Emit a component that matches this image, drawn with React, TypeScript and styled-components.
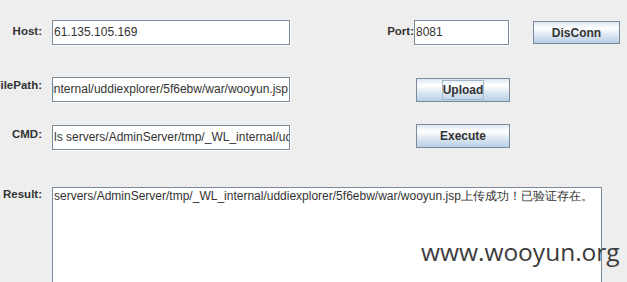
import React from "react";
import styled, { createGlobalStyle } from "styled-components";

const GlobalStyle = createGlobalStyle`
  html, body {
    margin: 0;
    padding: 0;
  }
  body {
    background: #eeeeee;
    overflow: hidden;
    font-family: "Liberation Sans", Arial, sans-serif;
  }
`;

const Window = styled.div`
  position: relative;
  width: 627px;
  height: 282px;
  overflow: hidden;
  background: #eeeeee;
  color: #333333;
`;

const Form = styled.div`
  display: flex;
  flex-direction: column;
`;

const Row = styled.div<{ $top: number }>`
  display: flex;
  align-items: flex-start;
  margin-top: ${(p) => p.$top}px;
`;

const Label = styled.label<{ $width?: number; $offset: number; $gap?: number }>`
  display: flex;
  justify-content: flex-end;
  flex-shrink: 0;
  width: ${(p) => p.$width ?? 42}px;
  margin-right: ${(p) => p.$gap ?? 10}px;
  padding-top: ${(p) => p.$offset}px;
  font-size: 11.5px;
  font-weight: bold;
  line-height: 13px;
  white-space: nowrap;
`;

const Field = styled.div<{ $width: number; $end?: boolean; $shift?: number }>`
  box-sizing: border-box;
  display: flex;
  justify-content: ${(p) => (p.$end ? "flex-end" : "flex-start")};
  flex-shrink: 0;
  width: ${(p) => p.$width}px;
  height: 25px;
  margin-top: ${(p) => p.$shift ?? 0}px;
  padding: 0 1px;
  overflow: hidden;
  background: #ffffff;
  border: 1px solid #7a8a99;
  box-shadow: 1px 1px 0 #ffffff;
  font-size: 12px;
  line-height: 23px;
  white-space: nowrap;
`;

const Button = styled.button<{ $left: number; $width: number; $height: number; $shift?: number }>`
  box-sizing: border-box;
  display: flex;
  align-items: center;
  justify-content: center;
  flex-shrink: 0;
  margin: ${(p) => p.$shift ?? 0}px 0 0 ${(p) => p.$left}px;
  width: ${(p) => p.$width}px;
  height: ${(p) => p.$height}px;
  padding: 0;
  border: 1px solid #7a8a99;
  background: linear-gradient(
    to bottom,
    #dde8f3 0%,
    #ffffff 30%,
    #dde8f3 60%,
    #b8cfe5 100%
  );
  color: #333333;
  font-family: "Liberation Sans", Arial, sans-serif;
  font-size: 12px;
  font-weight: bold;
`;

const Focus = styled.span`
  display: inline-block;
  border: 1px solid #a3b8cc;
  line-height: 18px;
`;

const TextArea = styled.div`
  box-sizing: border-box;
  flex-shrink: 0;
  width: 550px;
  height: 130px;
  padding: 1px 1px;
  background: #ffffff;
  border: 1px solid #7a8a99;
  font-size: 12px;
  line-height: 15px;
  white-space: nowrap;
  overflow: hidden;
`;

const Watermark = styled.div`
  position: absolute;
  left: 421px;
  top: 237px;
  font-family: "Open Sans", "Noto Sans", sans-serif;
  font-size: 24.5px;
  line-height: 30px;
  color: #3c3c3c;
  white-space: nowrap;
`;

const path = "servers/AdminServer/tmp/_WL_internal/uddiexplorer/5f6ebw/war/wooyun.jsp";

export default function App() {
  return (
    <>
      <GlobalStyle />
      <Window>
        <Form>
          <Row $top={20}>
            <Label $offset={5}>Host:</Label>
            <Field $width={238}>61.135.105.169</Field>
            <Label $width={124} $gap={0} $offset={5}>
              Port:
            </Label>
            <Field $width={95}>8081</Field>
            <Button $left={24} $width={87} $height={23} $shift={1}>
              DisConn
            </Button>
          </Row>
          <Row $top={32}>
            <Label $offset={2}>FilePath:</Label>
            <Field $width={238} $end>
              {path}
            </Field>
            <Button $left={126} $width={94} $height={24} $shift={1}>
              <Focus>Upload</Focus>
            </Button>
          </Row>
          <Row $top={22}>
            <Label $offset={4}>CMD:</Label>
            <Field $width={238} $shift={1}>
              ls servers/AdminServer/tmp/_WL_internal/uddiexplorer/5f6ebw/war/
            </Field>
            <Button $left={126} $width={94} $height={24}>
              Execute
            </Button>
          </Row>
          <Row $top={37}>
            <Label $offset={1}>Result:</Label>
            <TextArea>{path}上传成功！已验证存在。</TextArea>
          </Row>
        </Form>
        <Watermark>www.wooyun.org</Watermark>
      </Window>
    </>
  );
}
